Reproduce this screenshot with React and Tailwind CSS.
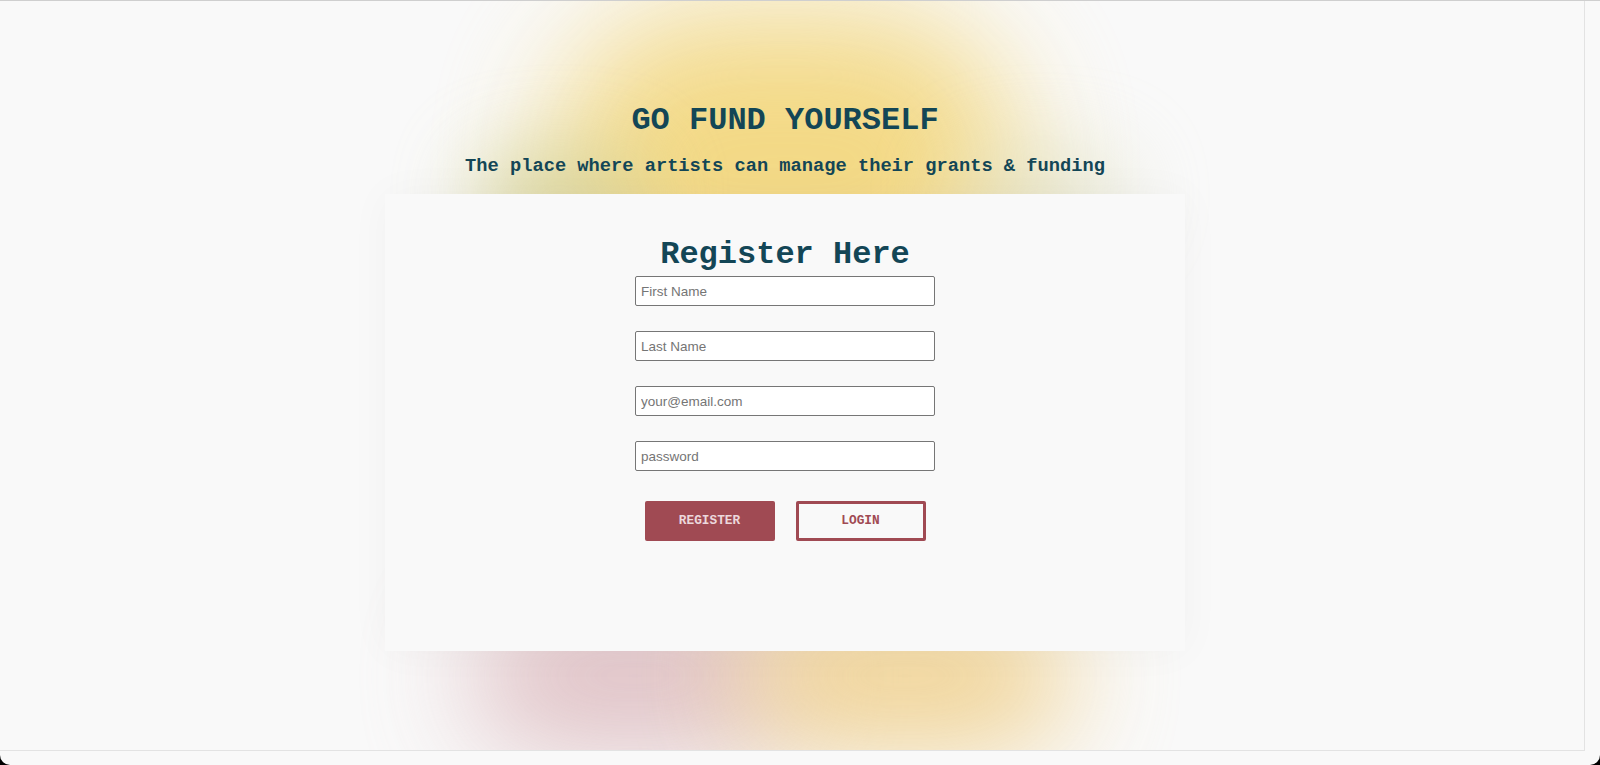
import React from 'react';

const fields = [
  { type: 'text', placeholder: 'First Name' },
  { type: 'text', placeholder: 'Last Name' },
  { type: 'email', placeholder: 'your@email.com' },
  { type: 'password', placeholder: 'password' },
];

function Glow() {
  return (
    <div className="absolute inset-0 pointer-events-none">
      <div className="absolute left-[555px] top-[10px] w-[460px] h-[300px] rounded-full bg-[#f3d67a] blur-[60px] opacity-90" />
      <div className="absolute left-[470px] top-[150px] w-[180px] h-[90px] rounded-full bg-[#cfcd8c] blur-[40px] opacity-70" />
      <div className="absolute left-[950px] top-[150px] w-[180px] h-[90px] rounded-full bg-[#d8d9b4] blur-[40px] opacity-50" />
      <div className="absolute left-[470px] top-[600px] w-[330px] h-[150px] rounded-full bg-[#d9b3b8] blur-[55px] opacity-80" />
      <div className="absolute left-[740px] top-[600px] w-[330px] h-[150px] rounded-full bg-[#efcd85] blur-[55px] opacity-85" />
    </div>
  );
}

export default function App() {
  return (
    <div className="w-[1600px] h-[765px] bg-black overflow-hidden">
      <div className="w-full h-full bg-[#f9f9f9] rounded-b-[10px] flex flex-col overflow-hidden">
        <div className="flex h-[751px] border-t border-[#cfcfcf]">
          <main className="relative w-[1585px] border-r border-b border-[#e3e3e3] overflow-hidden">
            <Glow />
            <div className="relative w-[1570px] flex flex-col items-center pt-[102px] font-['Liberation_Mono',monospace] text-[#134656]">
              <h1 className="text-[32px] leading-[36px] font-bold">GO FUND YOURSELF</h1>
              <h3 className="mt-[17px] text-[18.72px] leading-[21px] font-bold">
                The place where artists can manage their grants &amp; funding
              </h3>
              <section className="mt-[17px] w-[800px] h-[457px] bg-[#f9f9f9] shadow-[0_0_40px_rgba(0,0,0,0.035)] flex flex-col items-center pt-[43px]">
                <h2 className="text-[32px] leading-[36px] font-bold">Register Here</h2>
                <form className="mt-[3px] flex flex-col items-center gap-[25px]">
                  {fields.map((f) => (
                    <input
                      key={f.placeholder}
                      type={f.type}
                      placeholder={f.placeholder}
                      className="w-[300px] h-[30px] px-[5px] bg-white border border-[#767676] rounded-[2px] font-['Liberation_Sans',Arial,sans-serif] text-[13.5px] text-black placeholder:text-[#757575] outline-none"
                    />
                  ))}
                  <div className="mt-[5px] flex gap-[21px]">
                    <button type="button" className="w-[130px] h-[40px] bg-[#a04a53] rounded-[2px] text-[#ecd8dc] text-[12.8px] font-bold">
                      REGISTER
                    </button>
                    <button type="button" className="w-[130px] h-[40px] border-[3px] border-[#a04a53] rounded-[2px] text-[#a04a53] text-[12.8px] font-bold">
                      LOGIN
                    </button>
                  </div>
                </form>
              </section>
            </div>
          </main>
          <div className="flex-1" />
        </div>
        <div className="flex-1" />
      </div>
    </div>
  );
}
